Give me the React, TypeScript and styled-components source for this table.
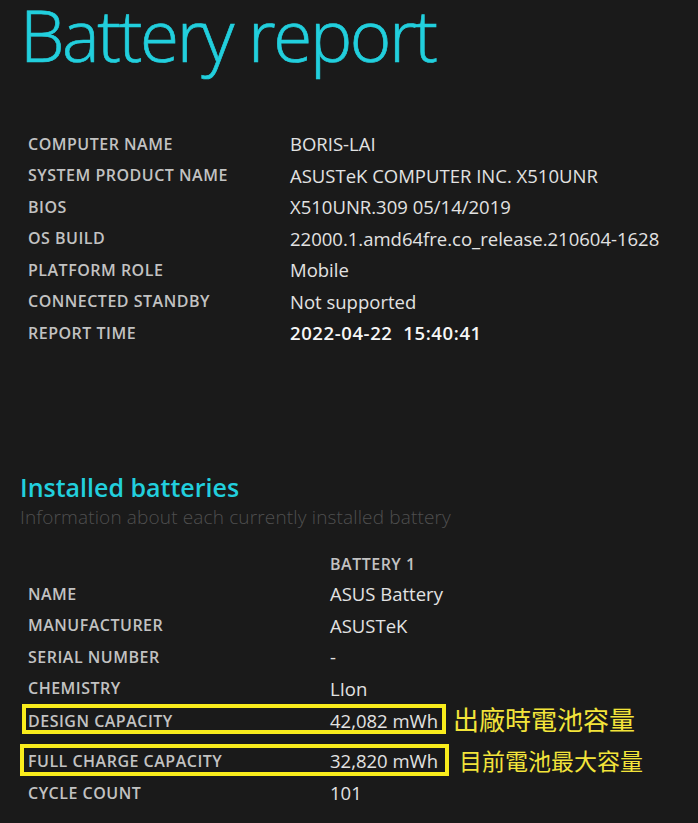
import React from "react";
import styled, { createGlobalStyle } from "styled-components";

const GlobalStyle = createGlobalStyle`
  html, body {
    margin: 0;
    padding: 0;
    background: #1a1a1a;
  }
  body {
    font-family: "Open Sans", "Noto Sans", sans-serif;
    color: #e2e2e2;
  }
`;

const Page = styled.div`
  width: 698px;
  height: 823px;
  overflow: hidden;
  background: #1a1a1a;
  box-sizing: border-box;
  padding-left: 20px;
`;

const Title = styled.h1`
  margin: 0;
  font-size: 71px;
  line-height: 70px;
  font-weight: 300;
  -webkit-text-stroke: 0.7px #22cfdd;
  color: #22cfdd;
  letter-spacing: -2.4px;
`;

const InfoTable = styled.div`
  display: grid;
  grid-template-columns: 262px 1fr;
  grid-auto-rows: 31.5px;
  align-items: center;
  margin-top: 58px;
  padding-left: 8px;
`;

const Label = styled.div`
  font-size: 16px;
  font-weight: 600;
  color: #c2c2c2;
  letter-spacing: 0.5px;
  text-transform: uppercase;
  white-space: nowrap;
`;

const Value = styled.div<{ $strong?: boolean }>`
  font-size: 18.5px;
  font-weight: ${(p) => (p.$strong ? 600 : 400)};
  color: ${(p) => (p.$strong ? "#f6f6f6" : "#e2e2e2")};
  letter-spacing: ${(p) => (p.$strong ? "0.6px" : "0")};
  white-space: nowrap;
`;

const SectionTitle = styled.h2`
  margin: 123.5px 0 0 0;
  font-size: 25px;
  line-height: 30px;
  font-weight: 600;
  color: #22cfdd;
`;

const SectionSub = styled.div`
  font-size: 19px;
  line-height: 30px;
  font-weight: 300;
  color: #4f4f4f;
  letter-spacing: 0.15px;
`;

const BatteryTable = styled.div`
  display: flex;
  flex-direction: column;
  margin-top: 18px;
  padding-left: 8px;
`;

const Row = styled.div<{ $h?: number; $gapTop?: number }>`
  display: grid;
  grid-template-columns: 302px auto;
  align-items: center;
  height: ${(p) => p.$h ?? 31.5}px;
  margin-top: ${(p) => p.$gapTop ?? 0}px;
`;

const HeaderCell = styled(Label)`
  grid-column: 2;
`;

const HighlightRow = styled.div<{ $gapTop?: number; $left: number }>`
  display: flex;
  align-items: center;
  margin-top: ${(p) => p.$gapTop ?? 0}px;
  margin-left: -${(p) => p.$left}px;
`;

const HighlightBox = styled.div<{ $left: number; $w: number; $h: number }>`
  display: grid;
  grid-template-columns: 302px auto;
  align-items: center;
  box-sizing: border-box;
  width: ${(p) => p.$w}px;
  height: ${(p) => p.$h}px;
  border: 4px solid #f9ec1c;
  padding-left: ${(p) => p.$left - 4}px;
`;

const Note = styled.span<{ $size: number; $shift: number }>`
  font-family: "Noto Sans CJK TC", "Noto Sans CJK SC", sans-serif;
  font-size: ${(p) => p.$size}px;
  line-height: 1;
  color: #f3e43a;
  margin-left: ${(p) => p.$shift}px;
  white-space: nowrap;
`;

const info: [string, string, boolean?][] = [
  ["Computer name", "BORIS-LAI"],
  ["System product name", "ASUSTeK COMPUTER INC. X510UNR"],
  ["BIOS", "X510UNR.309 05/14/2019"],
  ["OS build", "22000.1.amd64fre.co_release.210604-1628"],
  ["Platform role", "Mobile"],
  ["Connected standby", "Not supported"],
  ["Report time", "2022-04-22\u00a0\u00a015:40:41", true],
];

const battery: [string, string][] = [
  ["Name", "ASUS Battery"],
  ["Manufacturer", "ASUSTeK"],
  ["Serial number", "-"],
  ["Chemistry", "LIon"],
];

export default function App() {
  return (
    <Page>
      <GlobalStyle />
      <Title>Battery report</Title>
      <InfoTable>
        {info.map(([k, v, strong]) => (
          <React.Fragment key={k}>
            <Label>{k}</Label>
            <Value $strong={strong}>{v}</Value>
          </React.Fragment>
        ))}
      </InfoTable>

      <SectionTitle>Installed batteries</SectionTitle>
      <SectionSub>Information about each currently installed battery</SectionSub>

      <BatteryTable>
        <Row $h={28}>
          <span />
          <HeaderCell>Battery 1</HeaderCell>
        </Row>
        {battery.map(([k, v]) => (
          <Row key={k}>
            <Label>{k}</Label>
            <Value>{v}</Value>
          </Row>
        ))}
        <HighlightRow $left={6}>
          <HighlightBox $left={6} $w={424} $h={30}>
            <Label>Design capacity</Label>
            <Value>42,082 mWh</Value>
          </HighlightBox>
          <Note $size={26} $shift={7}>出廠時電池容量</Note>
        </HighlightRow>
        <HighlightRow $gapTop={10} $left={8}>
          <HighlightBox $left={8} $w={429} $h={32}>
            <Label>Full charge capacity</Label>
            <Value>32,820 mWh</Value>
          </HighlightBox>
          <Note $size={23} $shift={10}>目前電池最大容量</Note>
        </HighlightRow>
        <Row $h={33}>
          <Label>Cycle count</Label>
          <Value>101</Value>
        </Row>
      </BatteryTable>
    </Page>
  );
}
